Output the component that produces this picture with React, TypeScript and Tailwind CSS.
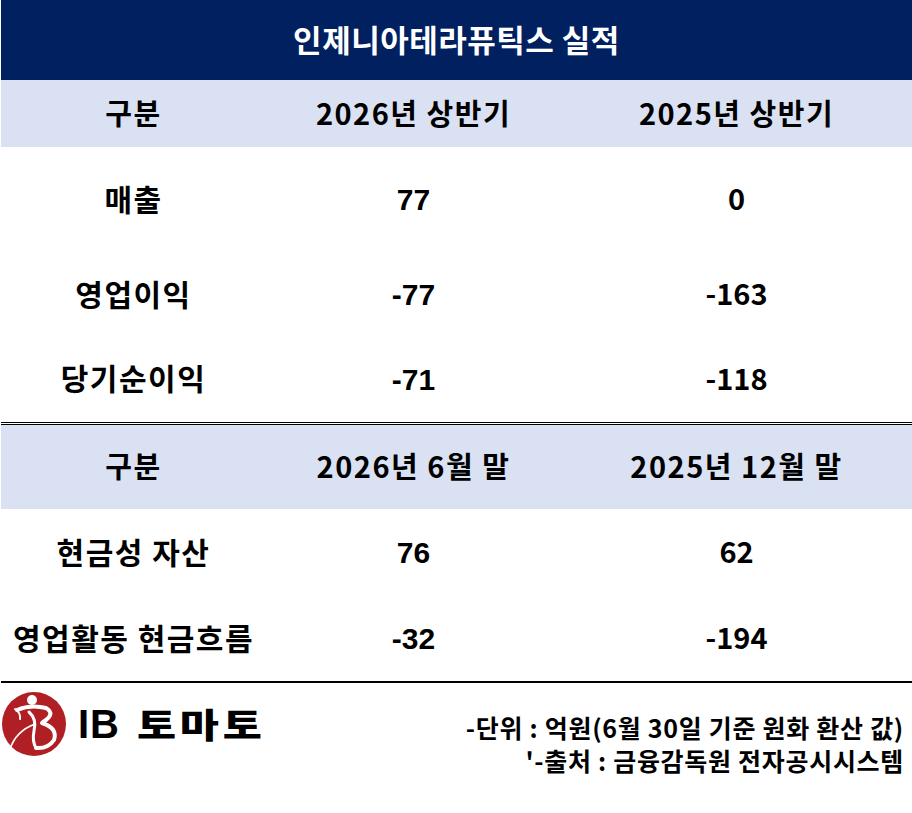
import React from "react";

const kr = "font-['Noto_Sans_CJK_KR','Noto_Sans',sans-serif]";
const arial = "font-['Liberation_Sans',Arial,sans-serif]";

type Row = { label: string; a: string; b: string; h: string };

const perfRows: Row[] = [
  { label: "매출", a: "77", b: "0", h: "h-[106px]" },
  { label: "영업이익", a: "-77", b: "-163", h: "h-[84px]" },
  { label: "당기순이익", a: "-71", b: "-118", h: "h-[85px]" },
];

const cashRows: Row[] = [
  { label: "현금성 자산", a: "76", b: "62", h: "h-[88px]" },
  { label: "영업활동 현금흐름", a: "-32", b: "-194", h: "h-[84px]" },
];

const HeadBand = ({ cols, h }: { cols: string[]; h: string }) => (
  <div className={`grid grid-cols-[265px_295px_1fr] ${h} bg-[#D9E1F2] text-[29px] font-bold tracking-[1.5px] text-black`}>
    {cols.map((c, i) => (
      <div key={i} className="flex items-center justify-center pb-[3px] leading-none">
        {c}
      </div>
    ))}
  </div>
);

const DataRow = ({ row }: { row: Row }) => (
  <div className={`grid grid-cols-[265px_295px_1fr] ${row.h} text-black font-bold`}>
    <div className="flex items-center justify-center pb-[5px] text-[30px] tracking-[1.5px] leading-none">
      {row.label}
    </div>
    <div className={`flex items-center justify-center text-[30px] leading-none ${arial}`}>{row.a}</div>
    <div className="flex items-center justify-center pb-[5px] text-[29px] leading-none">{row.b}</div>
  </div>
);

const Logo = () => (
  <div className="flex items-center">
    <svg width="66" height="66" viewBox="0 0 66 66">
      <circle cx="33" cy="33" r="32" fill="#B01F24" />
      <circle cx="31" cy="9" r="5" fill="#fff" />
      <path d="M16 19 Q30 13 45 17 Q55 23 42 31" fill="none" stroke="#fff" strokeWidth="4" strokeLinecap="round" />
      <path d="M41 32 Q57 37 53 49 Q47 58 35 57" fill="none" stroke="#fff" strokeWidth="4" strokeLinecap="round" />
      <path d="M28 21 Q36 28 33 40 Q31 50 35 57" fill="none" stroke="#fff" strokeWidth="3" strokeLinecap="round" />
      <path d="M9 58 Q15 40 34 33" fill="none" stroke="#fff" strokeWidth="1.8" strokeLinecap="round" />
      <path d="M14 18 Q20 22 19 28" fill="none" stroke="#fff" strokeWidth="2" strokeLinecap="round" />
    </svg>
    <span className={`ml-[11px] text-[40px] font-bold tracking-[1px] leading-none text-black ${arial}`}>IB</span>
    <span className="ml-[17px] inline-block origin-left scale-x-[1.25] text-[34px] font-black tracking-[3px] leading-none text-black">
      토마토
    </span>
  </div>
);

export default function App() {
  return (
    <div className={`w-[912px] h-[813px] bg-white ${kr}`}>
      <div className="pl-[1px]">
        <div className="h-[80px] bg-[#002060] flex items-center justify-center pb-[4px] text-white text-[31px] font-bold tracking-[0.5px] leading-none">
          인제니아테라퓨틱스 실적
        </div>
        <HeadBand cols={["구분", "2026년 상반기", "2025년 상반기"]} h="h-[67px]" />
        {perfRows.map((r) => (
          <DataRow key={r.label} row={r} />
        ))}
        <div className="border-t-[3px] border-double border-black" />
        <HeadBand cols={["구분", "2026년 6월 말", "2025년 12월 말"]} h="h-[84px]" />
        {cashRows.map((r) => (
          <DataRow key={r.label} row={r} />
        ))}
        <div className="h-[2px] bg-black" />
      </div>
      <div className="flex justify-between">
        <div className="pt-[8px] pl-[1px]">
          <Logo />
        </div>
        <div className="pt-[28px] pr-[8px] text-right text-[25px] font-bold tracking-[0.7px] leading-[33px] text-black">
          <div>-단위 : 억원(6월 30일 기준 원화 환산 값)</div>
          <div>'-출처 : 금융감독원 전자공시시스템</div>
        </div>
      </div>
    </div>
  );
}
